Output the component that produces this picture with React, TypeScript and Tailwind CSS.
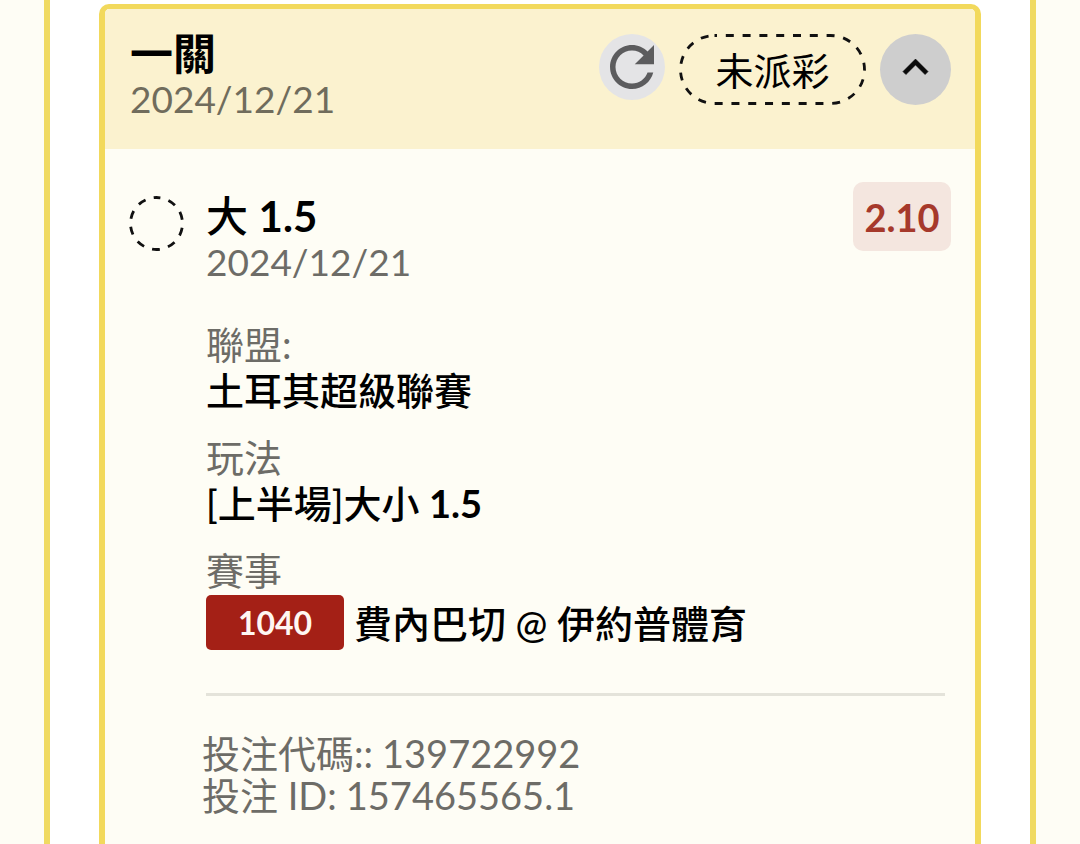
import React from 'react';

const details = [
  { label: '聯盟:', value: '土耳其超級聯賽', line: '' },
  { label: '玩法', value: '[上半場]大小', line: '1.5' },
];

const references = [
  { label: '投注代碼::', value: '139722992' },
  { label: '投注 ID:', value: '157465565.1' },
];

const RefreshIcon = () => (
  <svg className="size-[66px]" viewBox="0 0 24 24" fill="#5c5c5e" aria-hidden="true">
    <path d="M17.65 6.35C16.2 4.9 14.21 4 12 4c-4.42 0-7.99 3.58-7.99 8s3.57 8 7.99 8c3.73 0 6.84-2.55 7.73-6h-2.08c-.82 2.33-3.04 4-5.65 4-3.31 0-6-2.69-6-6s2.69-6 6-6c1.66 0 3.14.69 4.22 1.78L13 11h7V4l-2.35 2.35z" />
  </svg>
);

const ChevronUpIcon = () => (
  <svg className="size-[71px]" viewBox="-5 -4 34 34" fill="#0a0a0a" stroke="#0a0a0a" strokeWidth="0.3" aria-hidden="true">
    <path d="M12 8l-6 6 1.41 1.41L12 10.83l4.59 4.58L18 14z" />
  </svg>
);

const BetHeader = () => (
  <header className="flex items-start justify-between bg-[#fbf2cf] pt-[22px] pb-7 pl-[25px] pr-6">
    <div className="leading-[46px]">
      <h1 className="text-[43px] font-bold">一關</h1>
      <p className="text-[37px] leading-[44px] text-[#706c5c]">2024/12/21</p>
    </div>
    <div className="mt-[3px] flex items-start gap-[14px]">
      <button type="button" aria-label="重新整理" className="rounded-full bg-[#e4e4e6]">
        <RefreshIcon />
      </button>
      <div className="relative flex h-[71px] w-[187px] items-center justify-center text-[38px] leading-[46px]">
        <svg className="absolute inset-0 size-full" viewBox="0 0 187 71" fill="none" aria-hidden="true">
          <rect
            x="1.5" y="1.5" width="184" height="68" rx="34"
            stroke="#111" strokeWidth="2.8" strokeDasharray="8 8.8" strokeDashoffset="5.5"
          />
        </svg>
        <span>未派彩</span>
      </div>
      <button type="button" aria-label="收合" className="rounded-full bg-[#cecece]">
        <ChevronUpIcon />
      </button>
    </div>
  </header>
);

const BetSelection = () => (
  <section className="flex items-start px-6 pt-[33px]">
    <svg className="mt-[14px] size-[55px] shrink-0" viewBox="0 0 55 55" fill="none" aria-hidden="true">
      <circle
        cx="27.5" cy="27.5" r="26" transform="rotate(-90 27.5 27.5)"
        stroke="#111" strokeWidth="2.8" strokeDasharray="8 8.34" strokeDashoffset="4"
      />
    </svg>
    <div className="ml-[22px] flex-1 pt-[11px] text-[38px] leading-[46px]">
      <h2 className="text-[42px] font-medium">
        大 <b className="font-bold">1.5</b>
      </h2>
      <p className="text-[37px] text-[#6d6c67]">2024/12/21</p>

      <dl className="mt-9 space-y-[21px]">
        {details.map((item) => (
          <div key={item.label}>
            <dt className="text-[#6d6c67]">{item.label}</dt>
            <dd className="font-medium">
              {item.value} {item.line && <b className="font-bold">{item.line}</b>}
            </dd>
          </div>
        ))}
        <div>
          <dt className="text-[#6d6c67]">賽事</dt>
          <dd className="mt-0.5 flex items-center gap-[10px] font-medium">
            <span className="flex h-[55px] w-[138px] items-center justify-center rounded-[5px] bg-[#a42016] text-[32px] font-bold text-[#fff7f2]">
              1040
            </span>
            費內巴切 @ 伊約普體育
          </dd>
        </div>
      </dl>
    </div>
    <span className="flex h-[69px] w-[98px] items-center justify-center rounded-[10px] bg-[#f4e6df] pt-0.5 text-[38px] font-bold text-[#a6392b]">
      2.10
    </span>
  </section>
);

const App = () => {
  return (
    <div
      lang="zh-Hant"
      className="flex min-h-screen bg-[#fefdf5] px-11 font-['Lato','Noto_Sans_CJK_TC',sans-serif] text-black"
    >
      <main className="flex flex-1 flex-col border-x-[6px] border-[#f0da62] bg-white px-[49px] pt-1">
        <article className="flex-1 overflow-hidden rounded-t-[10px] border-x-[6px] border-t-[5px] border-[#f2d95c] bg-[#fefdf5]">
          <BetHeader />
          <BetSelection />
          <footer className="pl-[97px] pr-[30px]">
            <hr className="ml-1 mt-[43px] border-t-[3px] border-[#e4e3da]" />
            <dl className="mt-9 text-[38px] leading-[42px] text-[#6d6c67]">
              {references.map((item) => (
                <div key={item.label} className="flex gap-[9px]">
                  <dt>{item.label}</dt>
                  <dd>{item.value}</dd>
                </div>
              ))}
            </dl>
          </footer>
        </article>
      </main>
    </div>
  );
};

export default App;
